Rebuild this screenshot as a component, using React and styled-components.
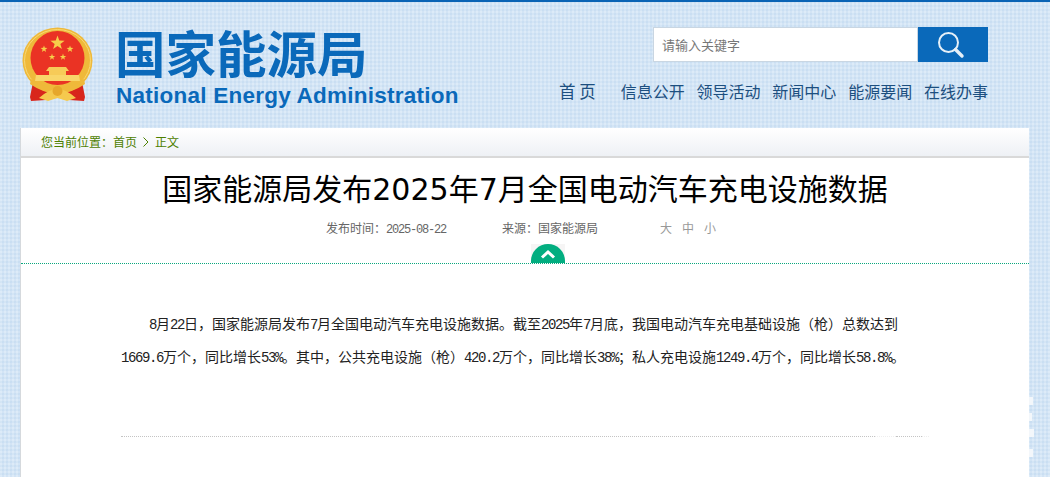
import React from 'react';
import styled, { createGlobalStyle } from 'styled-components';

const GlobalStyle = createGlobalStyle`
  html, body {
    margin: 0;
    padding: 0;
    overflow: hidden;
  }
  body {
    font-family: "Noto Sans CJK SC", "Liberation Sans", sans-serif;
    background-color: #d3e5f6;
    background-image:
      repeating-linear-gradient(90deg, rgba(255, 255, 255, 0.12) 0 2px, rgba(170, 200, 230, 0.12) 2px 4px),
      repeating-linear-gradient(0deg, rgba(255, 255, 255, 0.12) 0 2px, rgba(170, 200, 230, 0.12) 2px 4px);
  }
`;

const Page = styled.div`
  width: 1050px;
  height: 477px;
  overflow: hidden;
  border-top: 2px solid #0a64b5;
  box-sizing: border-box;
`;

const Header = styled.header`
  height: 126px;
  display: flex;
  justify-content: space-between;
  padding: 25px 62px 0 22px;
  box-sizing: border-box;
`;

const Logo = styled.div`
  display: flex;
  gap: 22px;
`;

const LogoText = styled.div`
  display: flex;
  flex-direction: column;
  color: #0a69ba;
`;

const LogoCn = styled.div`
  font-size: 50.5px;
  line-height: 54px;
  font-weight: 700;
  margin-top: -3px;
`;

const LogoEn = styled.div`
  font-family: "Liberation Sans", sans-serif;
  font-size: 22.5px;
  line-height: 26px;
  font-weight: 700;
  letter-spacing: 0.24px;
  margin: 5px 0 0 1px;
`;

const HeaderRight = styled.div`
  display: flex;
  flex-direction: column;
  align-items: flex-end;
  width: 430px;
`;

const SearchBar = styled.div`
  display: flex;
  width: 335px;
  height: 35px;
`;

const SearchInput = styled.div`
  flex: 1;
  background: #fff;
  border: 1px solid #c9d6e2;
  box-sizing: border-box;
  padding-left: 8px;
  font-size: 13px;
  line-height: 33px;
  color: #777;
`;

const SearchButton = styled.div`
  width: 70px;
  padding-right: 4px;
  box-sizing: border-box;
  background: #0a69ba;
  display: flex;
  align-items: center;
  justify-content: center;
`;

const Nav = styled.nav`
  display: flex;
  align-items: center;
  justify-content: flex-end;
  margin: 17px 0 0;
  font-size: 16px;
  line-height: 24px;
  color: #1c4f80;
`;

const NavItem = styled.a`
  margin-left: ${({ $wide }) => ($wide ? '25px' : '11.8px')};
  white-space: pre;
`;

const HomeItem = styled.a`
  white-space: pre;
  font-size: 16.5px;
`;

const Card = styled.main`
  width: 1009px;
  margin-left: 20px;
  height: 360px;
  background: #fff;
  border-left: 1px solid #d5d9dd;
  box-sizing: border-box;
  position: relative;
`;

const Crumb = styled.div`
  height: 30px;
  padding-left: 20px;
  box-sizing: border-box;
  background: linear-gradient(#ffffff, #eef1f5);
  border-bottom: 2px solid #d9d9d9;
  font-size: 12px;
  line-height: 28px;
  color: #4d8000;
  display: flex;
  align-items: flex-start;
  gap: 5px;
`;

const CrumbArrow = styled.svg`
  margin: 9px 1px 0;
`;

const Title = styled.h1`
  margin: 9px 0 0;
  height: 40px;
  font-size: 30px;
  line-height: 40px;
  font-weight: 400;
  color: #000;
  text-align: center;
`;

const TitleNum = styled.span`
  font-family: "DejaVu Sans", sans-serif;
  font-weight: 400;
`;

const Meta = styled.div`
  display: flex;
  margin: 12px 0 0 305px;
  height: 18px;
  font-size: 12px;
  line-height: 18px;
  color: #666;
`;

const MetaItem = styled.span`
  width: ${({ $w }) => $w}px;
  white-space: nowrap;
`;

const SizeLinks = styled.span`
  display: flex;
  gap: 10px;
  color: #999;
`;

const Divider = styled.div`
  height: 26px;
  border-bottom: 1px dotted #0aa77d;
  display: flex;
  justify-content: center;
  align-items: flex-end;
`;

const FoldBox = styled.div`
  width: 34px;
  height: 19px;
  margin-left: 46px;
  background: #f6f5f5;
`;

const FoldTab = styled.div`
  height: 100%;
  border-radius: 17px 17px 0 0;
  background: #02ae80;
  display: flex;
  align-items: center;
  justify-content: center;
`;

const Article = styled.article`
  width: 800px;
  margin: 44px 0 0 100px;
  font-size: 14px;
  line-height: 31px;
  color: #222;
  text-indent: 2em;
`;

const Num = styled.span`
  font-family: "Liberation Mono", monospace;
  letter-spacing: -0.1em;
`;

const Rule = styled.div`
  display: flex;
  margin: 62px 0 0 100px;
`;

const RuleSeg = styled.div`
  width: ${({ $w }) => $w}px;
  border-top: 1px dotted ${({ $c }) => $c};
`;

const Speck = styled.i`
  position: absolute;
  right: -${({ $w }) => $w}px;
  top: ${({ $y }) => $y}px;
  width: ${({ $w }) => $w}px;
  height: 8px;
  background: #f3f7fb;
`;

const Mixed = ({ text }) =>
  text.split(/([0-9.%-]+)/).map((part, i) =>
    /^[0-9.%-]+$/.test(part) ? <Num key={i}>{part}</Num> : part
  );

const Star = ({ cx, cy, r }) => {
  const pts = [];
  for (let i = 0; i < 10; i++) {
    const a = -Math.PI / 2 + (i * Math.PI) / 5;
    const d = i % 2 ? r * 0.4 : r;
    pts.push(`${(cx + d * Math.cos(a)).toFixed(2)},${(cy + d * Math.sin(a)).toFixed(2)}`);
  }
  return <polygon points={pts.join(' ')} fill="#f6cf4a" />;
};

const Emblem = () => (
  <svg width="71" height="75" viewBox="0 0 71 75">
    <path d="M12 50 L8 70 L9 74 L24 73 L35 69 L47 73 L62 74 L63 70 L59 50 Z" fill="#d8261c" />
    <ellipse cx="35.5" cy="33.5" rx="35" ry="33" fill="#efb93a" />
    <ellipse cx="35.5" cy="33.5" rx="33" ry="31" fill="none" stroke="#f8d873" strokeWidth="1" />
    <circle cx="35.5" cy="31" r="27" fill="#ea3324" />
    <Star cx={35.5} cy={16} r={7.5} />
    <Star cx={22} cy={22} r={3.6} />
    <Star cx={48} cy={22} r={3.6} />
    <Star cx={30} cy={30} r={3.4} />
    <Star cx={41} cy={30} r={3.4} />
    <path d="M27 40 H44 L47 44 H44 V48 H27 V44 H24 Z" fill="#f7cb58" />
    <path d="M14 48 H57 L58 54 H13 Z" fill="#f9d66a" />
    <path d="M9 52 Q35.5 70 62 52 L63 57 Q35.5 76 8 57 Z" fill="#efb93a" />
    <path d="M17 71 Q27 62 35.5 62 Q44 62 54 71 L45 74 L35.5 71 L26 74 Z" fill="#f5c94e" />
    <circle cx="35.5" cy="64" r="5" fill="#e6a72b" />
  </svg>
);

const SearchIcon = () => (
  <svg width="28" height="28" viewBox="0 0 28 28" fill="none" stroke="#e6f0f8" strokeLinecap="round">
    <circle cx="11.5" cy="11.5" r="9.5" strokeWidth="2" />
    <path d="M18.5 18.5 L25 25" strokeWidth="3.4" />
  </svg>
);

const NAV = ['信息公开', '领导活动', '新闻中心', '能源要闻', '在线办事'];

export default function App() {
  return (
    <Page>
      <GlobalStyle />
      <Header>
        <Logo>
          <Emblem />
          <LogoText>
            <LogoCn>国家能源局</LogoCn>
            <LogoEn>National Energy Administration</LogoEn>
          </LogoText>
        </Logo>
        <HeaderRight>
          <SearchBar>
            <SearchInput>请输入关键字</SearchInput>
            <SearchButton>
              <SearchIcon />
            </SearchButton>
          </SearchBar>
          <Nav>
            <HomeItem>首 页</HomeItem>
            {NAV.map((label, i) => (
              <NavItem key={label} $wide={i === 0}>
                {label}
              </NavItem>
            ))}
          </Nav>
        </HeaderRight>
      </Header>
      <Card>
        <Crumb>
          <span>您当前位置：首页</span>
          <CrumbArrow width="6" height="10" viewBox="0 0 6 10" fill="none" stroke="#4d8000">
            <path d="M0.5 0.5 L5 5 L0.5 9.5" />
          </CrumbArrow>
          <span>正文</span>
        </Crumb>
        <Title>
          国家能源局发布<TitleNum>2025</TitleNum>年<TitleNum>7</TitleNum>月全国电动汽车充电设施数据
        </Title>
        <Meta>
          <MetaItem $w={176}>
            发布时间：<Mixed text="2025-08-22" />
          </MetaItem>
          <MetaItem $w={158}>来源：国家能源局</MetaItem>
          <SizeLinks>
            <span>大</span>
            <span>中</span>
            <span>小</span>
          </SizeLinks>
        </Meta>
        <Divider>
          <FoldBox>
            <FoldTab>
              <svg width="16" height="10" viewBox="0 0 16 10" fill="none" stroke="#fff" strokeWidth="3">
                <path d="M2 8.5 L8 3 L14 8.5" />
              </svg>
            </FoldTab>
          </FoldBox>
        </Divider>
        <Article>
          <Mixed text="8月22日，国家能源局发布7月全国电动汽车充电设施数据。截至2025年7月底，我国电动汽车充电基础设施（枪）总数达到1669.6万个，同比增长53%。其中，公共充电设施（枪）420.2万个，同比增长38%；私人充电设施1249.4万个，同比增长58.8%。" />
        </Article>
        <Rule>
          <RuleSeg $w={754} $c="#c4c4c4" />
          <RuleSeg $w={21} $c="#eeeeee" />
          <RuleSeg $w={26} $c="#c4c4c4" />
          <RuleSeg $w={7} $c="#eeeeee" />
        </Rule>
        <Speck $y={269} $w={4} />
        <Speck $y={285} $w={3} />
        <Speck $y={301} $w={5} />
        <Speck $y={321} $w={4} />
      </Card>
    </Page>
  );
}
